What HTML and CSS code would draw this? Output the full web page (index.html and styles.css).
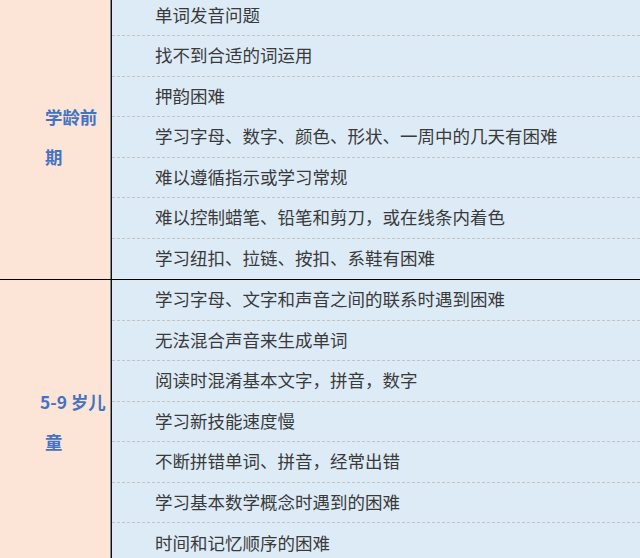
FILE: index.html
```html
<!DOCTYPE html>
<html lang="zh-CN">
<head>
<meta charset="utf-8">
<link rel="stylesheet" href="styles.css">
</head>
<body>
<div class="table">
  <section class="group">
    <div class="age">学龄前期</div>
    <ul class="items">
      <li>单词发音问题</li>
      <li>找不到合适的词运用</li>
      <li>押韵困难</li>
      <li>学习字母、数字、颜色、形状、一周中的几天有困难</li>
      <li>难以遵循指示或学习常规</li>
      <li>难以控制蜡笔、铅笔和剪刀，或在线条内着色</li>
      <li>学习纽扣、拉链、按扣、系鞋有困难</li>
    </ul>
  </section>
  <section class="group group-second">
    <div class="age age-shift">5-9 岁儿童</div>
    <ul class="items">
      <li>学习字母、文字和声音之间的联系时遇到困难</li>
      <li>无法混合声音来生成单词</li>
      <li>阅读时混淆基本文字，拼音，数字</li>
      <li>学习新技能速度慢</li>
      <li>不断拼错单词、拼音，经常出错</li>
      <li>学习基本数学概念时遇到的困难</li>
      <li>时间和记忆顺序的困难</li>
    </ul>
  </section>
</div>
</body>
</html>
```

FILE: styles.css
```css
html, body {
  margin: 0;
  padding: 0;
  background: #ffffff;
}
body {
  width: 640px;
  height: 558px;
  overflow: hidden;
  font-family: "Noto Sans CJK SC", "Noto Sans", sans-serif;
}
.table {
  margin-top: -4.5px;
  display: flex;
  flex-direction: column;
}
.group {
  display: grid;
  grid-template-columns: 111px 1fr;
}
.group-second {
  border-top: 1px solid #000000;
}
.age {
  background: #fce4d6;
  border-right: 1px solid #8a8a8a;
  color: #4472c4;
  font-weight: bold;
  font-size: 17.4px;
  line-height: 40px;
  padding-left: 45px;
  display: flex;
  align-items: center;
}
.age-shift {
  text-indent: -5px;
}
.items {
  list-style: none;
  margin: 0;
  padding: 0;
  background: #ddebf7;
  border-left: 1px solid #111111;
}
.items li {
  box-sizing: border-box;
  height: 40.5px;
  border-bottom: 1px dashed #c4c4c4;
  padding-left: 43px;
  padding-bottom: 2px;
  display: flex;
  align-items: center;
  font-size: 17.5px;
  color: #3a3a3a;
  white-space: nowrap;
}
.items li:last-child {
  border-bottom: none;
}
```
